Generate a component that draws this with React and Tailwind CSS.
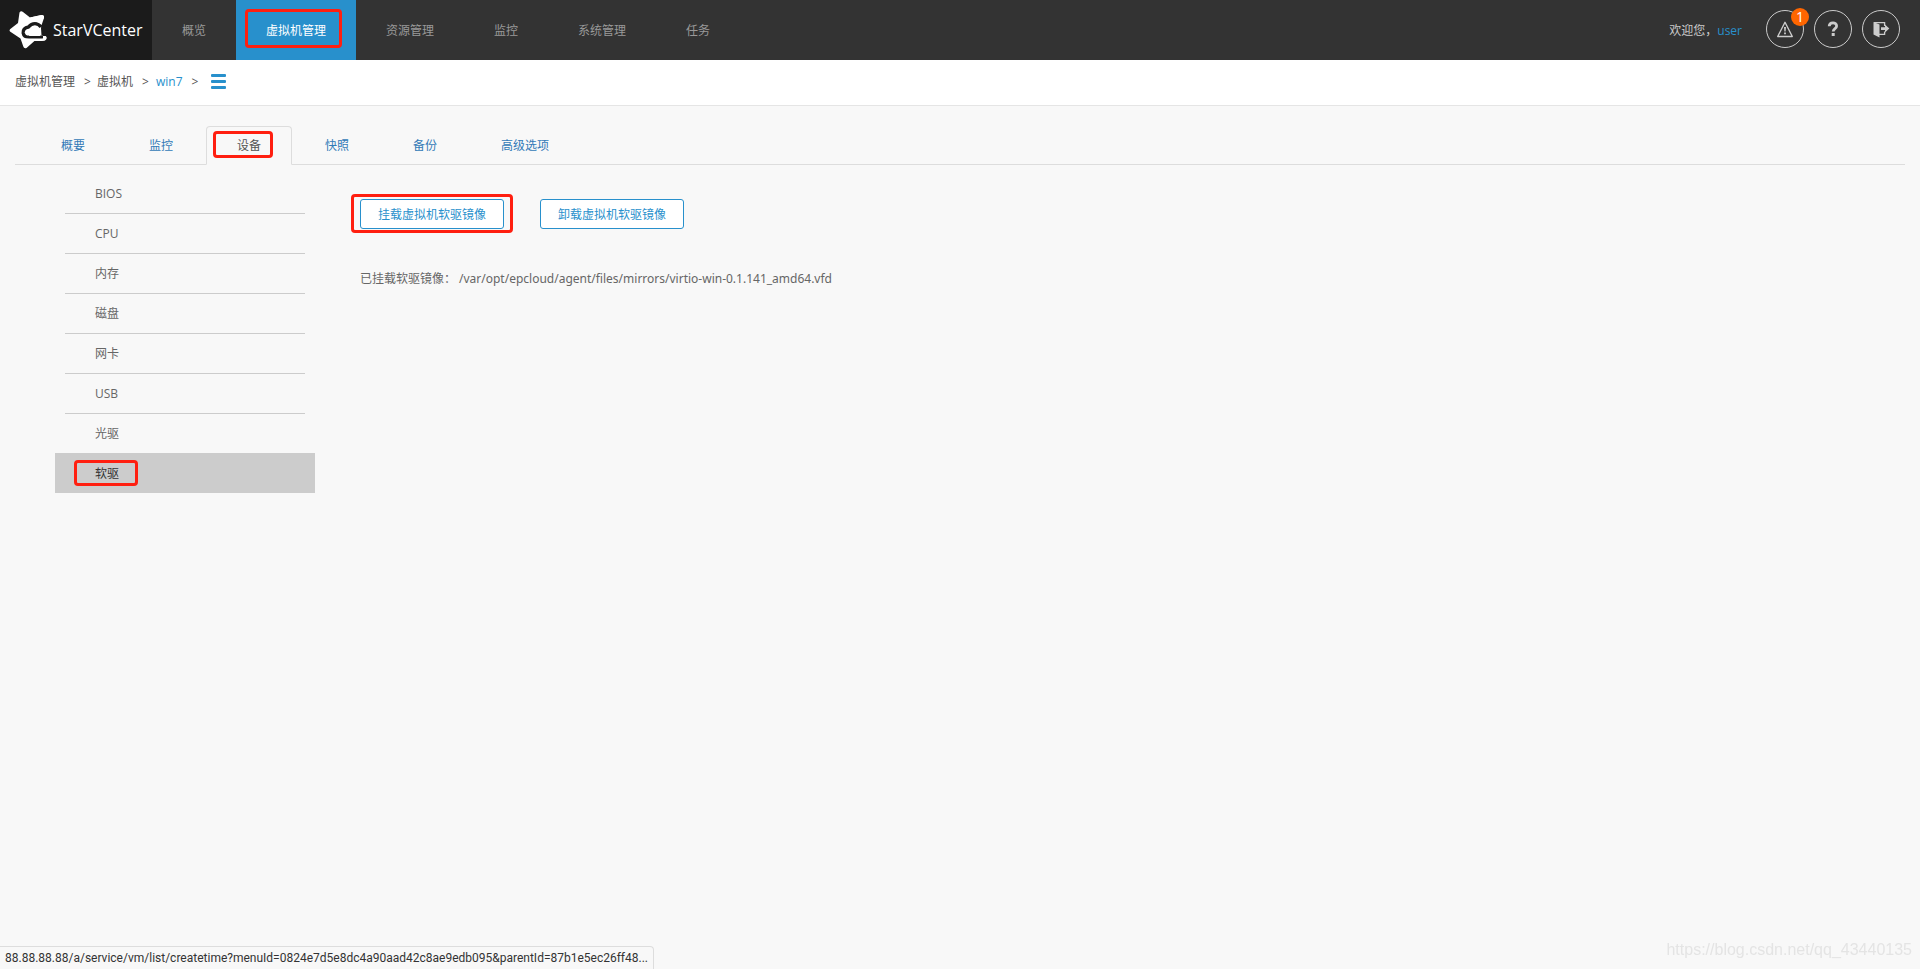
import React, { useState } from "react";
import clsx from "clsx";

const NAV = ["概览", "虚拟机管理", "资源管理", "监控", "系统管理", "任务"];
const TABS = ["概要", "监控", "设备", "快照", "备份", "高级选项"];
const DEVICES = ["BIOS", "CPU", "内存", "磁盘", "网卡", "USB", "光驱", "软驱"];

// Red outline drawn over a control to point it out
const Highlight = ({ className }) => (
  <span
    className={clsx(
      "pointer-events-none absolute rounded border-3 border-[#ff1f10]",
      className
    )}
  />
);

const Logo = () => (
  <svg viewBox="0 2 40 40" className="size-10" aria-hidden="true">
    <path
      d="M12.5 4.5Q14 2.3 16 4L23 9.5L34.5 7Q37.5 7 37 10L34 20L34.5 27.5H37.5Q40 28 39.5 31L38 32.5H28L19.5 40Q17 41 16.3 38.5L13.5 30.5L3 23.5Q2 22.5 3 21.3L11 15Z"
      fill="#fff"
    />
    <path
      d="M34 19C31 14.5 25 14.5 21.5 19C17.5 19.5 15.8 22 16.2 25C16.7 28 19 29.3 22 29.3H36"
      fill="none"
      stroke="#1b1b1b"
      strokeWidth="3.4"
    />
    <path d="M34 8V16L36 28H42V16Z" fill="#1b1b1b" />
    <path d="M23 9.5L34.5 7Q37.5 7 37 10L34.6 17C32 14 28 12.8 24.5 14Z" fill="#fff" />
    <path d="M22.5 28Q20 25.5 22.8 23.8C23.5 20.3 29 19.5 30.8 23Q34.5 23.5 34 26.5L32.8 28Z" fill="#fff" />
    <path d="M18 31.8H35Q37.8 31.8 38.2 29.5" fill="none" stroke="#fff" strokeWidth="2.4" strokeLinecap="round" />
  </svg>
);

const WarningIcon = () => (
  <svg viewBox="0 0 18 18" className="size-[18px]" aria-hidden="true">
    <path d="M9 2.3L16.3 16.5H1.7Z" fill="none" stroke="#ccc" strokeWidth="1.4" strokeLinejoin="round" />
    <path d="M8 7H10L9.6 11.5H8.4ZM8.1 12.6H9.9V14.2H8.1Z" fill="#ccc" />
  </svg>
);

const HelpIcon = () => (
  <svg viewBox="0 0 18 18" className="size-[18px]" aria-hidden="true">
    <path d="M5.2 6.2C5.4 1.9 12.6 1.7 12.6 6.1C12.6 8.8 9.2 8.6 9.2 11.6" fill="none" stroke="#ccc" strokeWidth="2.8" />
    <rect x="7.7" y="13" width="3" height="3" fill="#ccc" />
  </svg>
);

const ExitIcon = () => (
  <svg viewBox="0 0 18 18" className="size-[18px]" aria-hidden="true">
    <path d="M1.5 2L7.5 4.5V17.5L1.5 14.5Z" fill="#ccc" />
    <path d="M2 2.6H12.6V6M12.6 11.5V14.4H7" fill="none" stroke="#ccc" strokeWidth="1.3" />
    <path d="M9 7.2H13V4.6L17.3 8.6L13 12.4V9.9H9Z" fill="#ccc" />
  </svg>
);

const MenuIcon = () => (
  <svg viewBox="0 0 15 15" className="h-[15px] w-[15px]" aria-hidden="true">
    <g fill="#2890cc">
      <rect width="15" height="3" rx="1" />
      <rect y="6" width="15" height="3" rx="1" />
      <rect y="12" width="15" height="3" rx="1" />
    </g>
  </svg>
);

const RoundButton = ({ label, children }) => (
  <button
    type="button"
    aria-label={label}
    className="relative flex size-[38px] items-center justify-center rounded-full border border-[#ccc]"
  >
    {children}
  </button>
);

const Header = ({ active, onSelect }) => (
  <header className="flex h-[60px] items-stretch bg-[#333]">
    <div className="flex w-[152px] items-center gap-1.5 bg-[#1b1b1b] pl-[7px] text-base text-white">
      <Logo />
      StarVCenter
    </div>
    <nav className="flex">
      {NAV.map((name) => (
        <a
          key={name}
          href="#"
          onClick={() => onSelect(name)}
          className={clsx(
            "relative flex items-center px-[30px] pt-0.5",
            name === active ? "bg-[#2890cc] text-white" : "text-[#999]"
          )}
        >
          {name}
          {name === "虚拟机管理" && <Highlight className="top-[9px] right-3.5 bottom-3 left-[9px]" />}
        </a>
      ))}
    </nav>
    <div className="ml-auto flex items-center pr-5">
      <span className="pt-0.5 text-[#ccc]">欢迎您，</span>
      <a href="#" className="mr-6 pt-0.5 text-[#2890cc]">user</a>
      <div className="flex gap-2.5 pb-0.5">
        <RoundButton label="告警">
          <WarningIcon />
          <span className="absolute -top-[3px] -right-1.5 flex size-[18px] items-center justify-center rounded-full bg-[#ff6600] text-sm leading-[18px] text-white">
            1
          </span>
        </RoundButton>
        <RoundButton label="帮助">
          <HelpIcon />
        </RoundButton>
        <RoundButton label="退出">
          <ExitIcon />
        </RoundButton>
      </div>
    </div>
  </header>
);

const Breadcrumb = () => (
  <div className="flex h-[46px] items-center border-b border-[#e5e5e5] bg-white px-[15px] pb-0.5 text-[#555]">
    <a href="#">虚拟机管理</a>
    <span className="w-[22px] pl-[9px]">&gt;</span>
    <a href="#">虚拟机</a>
    <span className="w-[23px] pl-[9px]">&gt;</span>
    <a href="#" className="text-[#2890cc]">win7</a>
    <span className="w-7 pl-[9px]">&gt;</span>
    <button type="button" aria-label="菜单">
      <MenuIcon />
    </button>
  </div>
);

const TabBar = ({ active, onSelect }) => (
  <div className="flex gap-0.5 border-b border-[#ddd] pl-[15px]" role="tablist">
    {TABS.map((name) => (
      <button
        key={name}
        type="button"
        role="tab"
        aria-selected={name === active}
        onClick={() => onSelect(name)}
        className={clsx(
          "relative -mb-px h-[39px] rounded-t border px-[30px]",
          name === active
            ? "border-[#ddd] border-b-[#f8f8f8] text-[#555]"
            : "border-transparent text-[#337ab7]"
        )}
      >
        {name}
        {name === "设备" && <Highlight className="top-1 right-[18px] bottom-1.5 left-1.5" />}
      </button>
    ))}
  </div>
);

const DeviceMenu = ({ active, onSelect }) => (
  <ul className="w-[260px] shrink-0">
    {DEVICES.map((name, i) => {
      const selected = name === active;
      return (
        <li key={name} className={clsx("h-10", selected ? "bg-[#ccc]" : "px-2.5")}>
          <a
            href="#"
            onClick={() => onSelect(name)}
            className={clsx(
              "relative flex h-full items-center border-t",
              selected ? "px-10 text-[#333]" : "px-[30px] text-[#666]",
              selected || i === 0 ? "border-transparent" : "border-[#ccc]"
            )}
          >
            {name}
            {name === "软驱" && <Highlight className="top-1.5 left-[19px] h-[26px] w-16" />}
          </a>
        </li>
      );
    })}
  </ul>
);

const OutlineButton = ({ children }) => (
  <button
    type="button"
    className="relative h-[30px] rounded-[3px] border border-[#2890cc] bg-white px-[17px] pt-0.5 text-[#2890cc]"
  >
    {children}
  </button>
);

const FloppyPanel = () => (
  <section className="flex-1 pt-[26px]">
    <div className="flex gap-9">
      <OutlineButton>
        挂载虚拟机软驱镜像
        <Highlight className="-inset-x-2.5 -top-1.5 -bottom-[5px]" />
      </OutlineButton>
      <OutlineButton>卸载虚拟机软驱镜像</OutlineButton>
    </div>
    <p className="mt-[41px] text-[#666]">
      <span className="mr-[3px]">已挂载软驱镜像：</span>
      <span className="font-['Noto_Sans',sans-serif]">
        /var/opt/epcloud/agent/files/mirrors/virtio-win-0.1.141_amd64.vfd
      </span>
    </p>
  </section>
);

export default function App() {
  const [nav, setNav] = useState("虚拟机管理");
  const [tab, setTab] = useState("设备");
  const [device, setDevice] = useState("软驱");

  return (
    <div className="min-h-screen bg-[#f8f8f8] font-['Open_Sans','Noto_Sans_CJK_SC',sans-serif] text-xs leading-[18px]">
      <Header active={nav} onSelect={setNav} />
      <Breadcrumb />
      <main className="px-[15px] pt-5">
        <TabBar active={tab} onSelect={setTab} />
        <div className="flex gap-[45px] pt-2 pl-10">
          <DeviceMenu active={device} onSelect={setDevice} />
          <FloppyPanel />
        </div>
      </main>

      {/* browser link preview */}
      <div className="fixed bottom-0 left-0 h-[23px] rounded-tr border-t border-r border-[#ddd] bg-[#f8f8f8] px-[5px] pt-0.5 font-['Roboto',sans-serif] text-[#333]">
        88.88.88.88/a/service/vm/list/createtime?menuId=0824e7d5e8dc4a90aad42c8ae9edb095&amp;parentId=87b1e5ec26ff48...
      </div>
      <div className="fixed right-2 bottom-[9px] font-['Liberation_Sans',sans-serif] text-base leading-5 text-[#e4e4e4]">
        https://blog.csdn.net/qq_43440135
      </div>
    </div>
  );
}
